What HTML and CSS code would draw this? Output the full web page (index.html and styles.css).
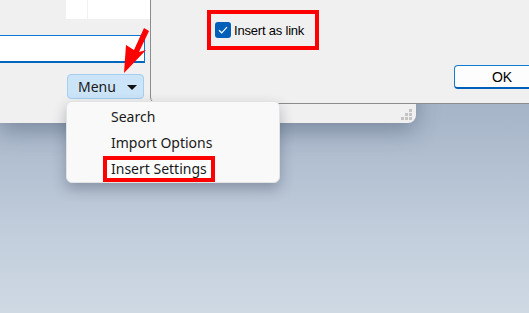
FILE: index.html
```html
<!DOCTYPE html>
<html lang="en">
<head>
  <meta charset="UTF-8" />
  <title>Menu - Insert Settings</title>
  <link rel="stylesheet" href="styles.css">
</head>
<body>
  <div class="desktop">
    <!-- main window behind -->
    <div class="window main-window">
      <div class="list-view">
        <div class="list-col"></div>
        <div class="list-col wide"></div>
      </div>
      <div class="text-field"></div>
      <button class="menu-btn" type="button">
        <span>Menu</span>
        <span class="caret"></span>
      </button>
      <div class="grip">
        <i></i><i></i><i></i><i></i><i></i><i></i>
      </div>
    </div>

    <!-- dialog in front -->
    <div class="window dialog">
      <div class="check-row highlight">
        <span class="checkbox">
          <svg width="10" height="8" viewBox="0 0 10 8"><path d="M1 4.2 L3.7 6.8 L9 1.2" fill="none" stroke="#fff" stroke-width="1.2"/></svg>
        </span>
        <span class="check-label">Insert as link</span>
      </div>
      <button class="ok-btn" type="button">OK</button>
    </div>

    <!-- dropdown -->
    <ul class="popup">
      <li>Search</li>
      <li>Import Options</li>
      <li><span class="highlight item-mark">Insert Settings</span></li>
    </ul>

    <svg class="arrow" width="32" height="50" viewBox="0 0 32 50">
      <path d="M24 3 L29 6 L19 27 L26 25 L4 48 L6 20 L14 25 Z" fill="#f00"/>
    </svg>
  </div>
</body>
</html>
```

FILE: styles.css
```css
* {
    margin: 0;
    padding: 0;
    box-sizing: border-box;
}
body {
    width: 529px;
    height: 313px;
    overflow: hidden;
    font-family: 'Noto Sans', 'Open Sans', sans-serif;
}
.desktop {
    position: relative;
    width: 529px;
    height: 313px;
    background: linear-gradient(180deg, #98a6ba 0%, #aab8cb 40%, #c2cedc 75%, #cfd9e4 100%);
}
.window {
    position: absolute;
    background: #f0f0f0;
}
.main-window {
    left: 0;
    top: 0;
    width: 416px;
    height: 123px;
    border-bottom-right-radius: 8px;
    box-shadow: 0 8px 22px rgba(40, 55, 80, 0.35);
    display: flex;
    flex-direction: column;
}
.list-view {
    display: flex;
    margin-left: 66px;
    height: 19px;
    background: #fff;
}
.list-col {
    width: 22px;
    border-right: 1px solid #f0f0f0;
}
.list-col.wide { width: 70px; border-right: none; }
.text-field {
    margin-top: 16px;
    width: 145px;
    height: 28px;
    background: #fff;
    border: 1px solid #0a78d4;
    border-left: none;
    border-bottom-width: 2px;
    border-bottom-color: #0067c0;
}
.menu-btn {
    margin-top: 11px;
    margin-left: 67px;
    width: 77px;
    height: 25px;
    background: #cce4f7;
    border: 1px solid #a5cff2;
    border-radius: 4px;
    display: flex;
    align-items: center;
    justify-content: space-between;
    padding: 0 6px 0 10px;
    font-family: 'Noto Sans', sans-serif;
    font-size: 14px;
    color: #1a1a1a;
}
.caret {
    width: 0;
    height: 0;
    border-left: 5px solid transparent;
    border-right: 5px solid transparent;
    border-top: 5px solid #111;
    margin-top: 1px;
}
.grip {
    position: absolute;
    right: 3px;
    bottom: 2px;
    width: 12px;
    height: 12px;
    display: grid;
    grid-template-columns: repeat(3, 3px);
    grid-template-rows: repeat(3, 3px);
    gap: 1px;
}
.grip i { background: #c4c4c4; }
.grip i:nth-child(1) { grid-column: 3; grid-row: 1; }
.grip i:nth-child(2) { grid-column: 2; grid-row: 2; }
.grip i:nth-child(3) { grid-column: 3; grid-row: 2; }
.grip i:nth-child(4) { grid-column: 1; grid-row: 3; }
.grip i:nth-child(5) { grid-column: 2; grid-row: 3; }
.grip i:nth-child(6) { grid-column: 3; grid-row: 3; }
.dialog {
    left: 150px;
    top: -1px;
    right: -2px;
    height: 105px;
    border: 1px solid #8c8c8c;
    border-bottom-left-radius: 7px;
    padding: 10px 0 0 56px;
    font-family: 'Liberation Sans', Arial, sans-serif;
    font-size: 13px;
    color: #000;
}
.highlight {
    border: 4px solid #f00;
}
.check-row {
    display: inline-flex;
    align-items: center;
    gap: 3px;
    height: 40px;
    padding: 0 11px 0 4px;
}
.check-label {
    letter-spacing: -0.2px;
}
.checkbox {
    width: 16px;
    height: 16px;
    border-radius: 3px;
    background: #005fb8;
    display: flex;
    align-items: center;
    justify-content: center;
}
.ok-btn {
    position: absolute;
    left: 303px;
    top: 65px;
    width: 90px;
    height: 24px;
    background: #fdfdfd;
    border: 1px solid #0f7bd6;
    border-bottom: 2px solid #005fb8;
    border-radius: 4px;
    font-family: 'Liberation Sans', Arial, sans-serif;
    font-size: 14px;
    color: #000;
    padding-left: 6px;
}
.popup {
    position: absolute;
    left: 66px;
    top: 101px;
    width: 214px;
    height: 82px;
    list-style: none;
    background: #f9f9f9;
    border: 1px solid #e3e3e3;
    border-radius: 6px;
    box-shadow: 0 6px 14px rgba(30, 40, 60, 0.3);
    padding-top: 2px;
    font-family: 'Noto Sans', sans-serif;
    font-size: 14px;
    color: #1a1a1a;
}
.popup li {
    height: 26px;
    line-height: 26px;
    padding-left: 44px;
}
.item-mark {
    display: inline-block;
    margin-left: -8px;
    padding: 0 4px 0 4px;
    height: 26px;
    line-height: 18px;
    background: #fff;
}
.arrow {
    position: absolute;
    left: 120px;
    top: 25px;
}
```
